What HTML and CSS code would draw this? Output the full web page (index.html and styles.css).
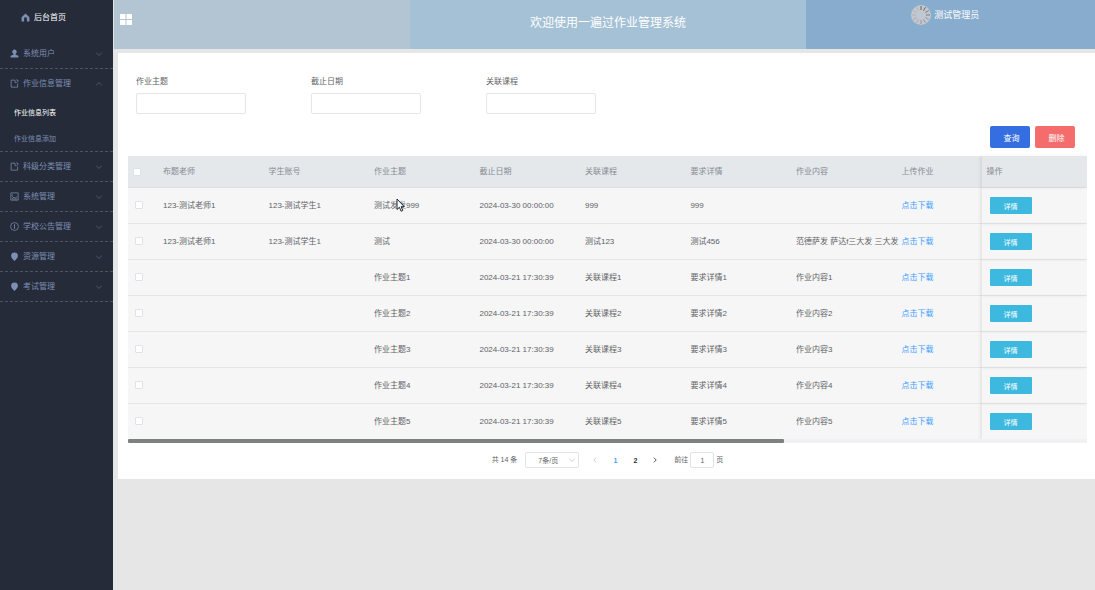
FILE: index.html
```html
<!DOCTYPE html>
<html>
<head>
    <meta charset="UTF-8">
    <title>一遍过作业管理系统</title>
    <link rel="stylesheet" href="styles.css">
</head>
<body>
<svg class="symbols" width="0" height="0">
    <symbol id="down" viewBox="0 0 10 10"><path d="M1.5 3.5L5 6.8l3.5-3.3" fill="none" stroke="currentColor"/></symbol>
    <symbol id="up" viewBox="0 0 10 10"><path d="M1.5 6.5L5 3.2l3.5 3.3" fill="none" stroke="currentColor"/></symbol>
    <symbol id="left" viewBox="0 0 10 10"><path d="M6.500 2L3.500 5l3 3" fill="none" stroke="currentColor"/></symbol>
    <symbol id="right" viewBox="0 0 10 10"><path d="M3.500 2l3 3-3 3" fill="none" stroke="currentColor"/></symbol>
    <symbol id="home" viewBox="0 0 16 16"><path d="M8 1l7 6.5V15h-4.500V10a2.500 2.500 0 0 0-5 0v5H1V7.500z" fill="currentColor"/></symbol>
    <symbol id="user" viewBox="0 0 16 16"><path d="M8 1a4 4 0 0 1 2 7.500V10l5 2v3H1v-3l5-2V8.500A4 4 0 0 1 8 1z" fill="currentColor"/></symbol>
    <symbol id="doc" viewBox="0 0 16 16"><path d="M9 2H2v12.500h11.500V8M9 2v4.500h3M11 1.500l3.500 1-1 3.500" fill="none" stroke="currentColor" stroke-width="1.300"/></symbol>
    <symbol id="pic" viewBox="0 0 16 16"><path d="M1.500 1.500h13v13h-13zM4 4v5M4 12l3-3 2 2 4-3M4 12.500h9" fill="none" stroke="currentColor" stroke-width="1.300"/></symbol>
    <symbol id="info" viewBox="0 0 16 16"><circle cx="8" cy="8" r="7" fill="none" stroke="currentColor" stroke-width="1.300"/><path d="M8 4v8" stroke="currentColor" stroke-width="1.500"/></symbol>
    <symbol id="pin" viewBox="0 0 16 16"><path d="M8 1a6 6 0 0 1 6 6c0 4-4 6-6 9-2-3-6-5-6-9a6 6 0 0 1 6-6z" fill="currentColor"/></symbol>
</svg>

<div class="layout">
    <aside class="sidebar">
        <a class="home" href="#"><svg class="icon"><use href="#home"/></svg>后台首页</a>
        <ul class="menu">
            <li><a class="item" href="#"><svg class="icon"><use href="#user"/></svg>系统用户<svg class="arrow"><use href="#down"/></svg></a></li>
            <li>
                <a class="item" href="#"><svg class="icon"><use href="#doc"/></svg>作业信息管理<svg class="arrow"><use href="#up"/></svg></a>
                <ul class="sub">
                    <li><a class="active" href="#">作业信息列表</a></li>
                    <li><a href="#">作业信息添加</a></li>
                </ul>
            </li>
            <li><a class="item" href="#"><svg class="icon"><use href="#doc"/></svg>科级分类管理<svg class="arrow"><use href="#down"/></svg></a></li>
            <li><a class="item" href="#"><svg class="icon"><use href="#pic"/></svg>系统管理<svg class="arrow"><use href="#down"/></svg></a></li>
            <li><a class="item" href="#"><svg class="icon"><use href="#info"/></svg>学校公告管理<svg class="arrow"><use href="#down"/></svg></a></li>
            <li><a class="item" href="#"><svg class="icon"><use href="#pin"/></svg>资源管理<svg class="arrow"><use href="#down"/></svg></a></li>
            <li><a class="item" href="#"><svg class="icon"><use href="#pin"/></svg>考试管理<svg class="arrow"><use href="#down"/></svg></a></li>
        </ul>
    </aside>

    <div class="main">
        <header class="header">
            <div class="header-left">
                <button class="toggle" type="button" aria-label="菜单">
                    <svg viewBox="0 0 12 11"><path d="M0 0h5.500v5H0zM6.500 0H12v5H6.500zM0 6h5.500v5H0zM6.500 6H12v5H6.500z" fill="#fff"/></svg>
                </button>
            </div>
            <div class="header-center">欢迎使用一遍过作业管理系统</div>
            <div class="header-right">
                <svg class="avatar" viewBox="0 0 20 20">
                    <circle cx="10" cy="10" r="10" fill="#c3c7cf"/>
                    <g stroke-width="1">
                        <path d="M10 1v4M14.500 2.200l-2 3.500" stroke="#666"/>
                        <path d="M17.800 5.500l-3.500 2M19 10h-4" stroke="#777d87"/>
                        <path d="M17.800 14.500l-3.500-2M14.500 17.800l-2-3.500M10 19v-4" stroke="#9297a0"/>
                        <path d="M5.500 17.800l2-3.500M2.200 14.500l3.500-2" stroke="#a5aab2"/>
                        <path d="M1 10h4M2.200 5.500l3.500 2M5.500 2.200l2 3.500" stroke="#b0b4bc"/>
                    </g>
                </svg>
                <span>测试管理员</span>
            </div>
        </header>

        <div class="panel">
            <form class="search">
                <div class="field"><label for="theme">作业主题</label><input type="text" id="theme"></div>
                <div class="field"><label for="deadline">截止日期</label><input type="text" id="deadline"></div>
                <div class="field"><label for="course">关联课程</label><input type="text" id="course"></div>
            </form>
            <div class="actions">
                <button class="btn query" type="button">查询</button>
                <button class="btn delete" type="button">删除</button>
            </div>

            <div class="table-wrap">
                <table class="table">
                    <thead>
                    <tr>
                        <th class="check"><input type="checkbox" aria-label="全选"></th>
                        <th>布题老师</th>
                        <th>学生账号</th>
                        <th>作业主题</th>
                        <th>截止日期</th>
                        <th>关联课程</th>
                        <th>要求详情</th>
                        <th>作业内容</th>
                        <th class="upload">上传作业</th>
                        <th class="op">操作</th>
                    </tr>
                    </thead>
                    <tbody>
                    <tr>
                        <td class="check"><input type="checkbox" aria-label="选择"></td>
                        <td>123-测试老师1</td><td>123-测试学生1</td>
                        <td class="pointed">测试发发999<svg class="cursor" viewBox="0 0 9 14"><path d="M1 1v10.500l2.400-2.200 1.700 3.900 1.700-.7-1.700-3.800h3.200z" fill="#fff" stroke="#1d2233"/></svg></td>
                        <td>2024-03-30 00:00:00</td><td>999</td><td>999</td><td></td>
                        <td><a href="#">点击下载</a></td>
                        <td class="op"><button type="button">详情</button></td>
                    </tr>
                    <tr>
                        <td class="check"><input type="checkbox" aria-label="选择"></td>
                        <td>123-测试老师1</td><td>123-测试学生1</td><td>测试</td>
                        <td>2024-03-30 00:00:00</td><td>测试123</td><td>测试456</td><td>范德萨发 萨达f三大发 三大发</td>
                        <td><a href="#">点击下载</a></td>
                        <td class="op"><button type="button">详情</button></td>
                    </tr>
                    <tr>
                        <td class="check"><input type="checkbox" aria-label="选择"></td>
                        <td></td><td></td><td>作业主题1</td>
                        <td>2024-03-21 17:30:39</td><td>关联课程1</td><td>要求详情1</td><td>作业内容1</td>
                        <td><a href="#">点击下载</a></td>
                        <td class="op"><button type="button">详情</button></td>
                    </tr>
                    <tr>
                        <td class="check"><input type="checkbox" aria-label="选择"></td>
                        <td></td><td></td><td>作业主题2</td>
                        <td>2024-03-21 17:30:39</td><td>关联课程2</td><td>要求详情2</td><td>作业内容2</td>
                        <td><a href="#">点击下载</a></td>
                        <td class="op"><button type="button">详情</button></td>
                    </tr>
                    <tr>
                        <td class="check"><input type="checkbox" aria-label="选择"></td>
                        <td></td><td></td><td>作业主题3</td>
                        <td>2024-03-21 17:30:39</td><td>关联课程3</td><td>要求详情3</td><td>作业内容3</td>
                        <td><a href="#">点击下载</a></td>
                        <td class="op"><button type="button">详情</button></td>
                    </tr>
                    <tr>
                        <td class="check"><input type="checkbox" aria-label="选择"></td>
                        <td></td><td></td><td>作业主题4</td>
                        <td>2024-03-21 17:30:39</td><td>关联课程4</td><td>要求详情4</td><td>作业内容4</td>
                        <td><a href="#">点击下载</a></td>
                        <td class="op"><button type="button">详情</button></td>
                    </tr>
                    <tr>
                        <td class="check"><input type="checkbox" aria-label="选择"></td>
                        <td></td><td></td><td>作业主题5</td>
                        <td>2024-03-21 17:30:39</td><td>关联课程5</td><td>要求详情5</td><td>作业内容5</td>
                        <td><a href="#">点击下载</a></td>
                        <td class="op"><button type="button">详情</button></td>
                    </tr>
                    </tbody>
                </table>
                <div class="scrollbar"><div class="thumb"></div></div>
            </div>

            <div class="pagination">
                <span>共 14 条</span>
                <div class="size">
                    <select aria-label="每页条数"><option>7条/页</option></select>
                    <svg><use href="#down"/></svg>
                </div>
                <div class="pager">
                    <button class="prev" type="button" aria-label="上一页" disabled><svg><use href="#left"/></svg></button>
                    <button class="current" type="button">1</button>
                    <button type="button">2</button>
                    <button type="button" aria-label="下一页"><svg><use href="#right"/></svg></button>
                </div>
                <div class="jump"><label for="page">前往</label><input type="text" id="page" value="1">页</div>
            </div>
        </div>
    </div>
</div>
</body>
</html>
```
FILE: styles.css
```css
* {
    margin: 0;
    padding: 0;
    box-sizing: border-box;
}

body, input, button, select {
    font-family: "Liberation Sans", "Noto Sans CJK SC", sans-serif;
    font-size: 8px;
    color: #606266;
}

body {
    line-height: 12px;
    background: #e6e6e6;
}

a {
    text-decoration: none;
}

ul {
    list-style: none;
}

button {
    border: none;
    background: none;
}

.symbols {
    position: absolute;
}

.layout {
    display: flex;
    min-height: 100vh;
}

/* 左侧菜单 */
.sidebar {
    flex: none;
    width: 113px;
    background: #252b39;
}

.sidebar a {
    display: flex;
    align-items: center;
    color: #7d8fb3;
}

.sidebar .home {
    height: 39px;
    padding: 0 0 4px 21px;
    color: #fff;
}

.icon {
    width: 9px;
    height: 9px;
    margin-right: 4px;
    color: #7d8fb3;
}

.menu > li {
    border-bottom: 1px dashed #50535c;
}

.menu .item {
    height: 29px;
    padding: 0 10px;
}

.arrow {
    width: 8px;
    height: 8px;
    margin-left: auto;
    color: #53607f;
}

.sub {
    padding-top: 1px;
}

.sub a {
    height: 26px;
    padding: 2px 0 0 14px;
    font-size: 7px;
}

.sub .active {
    color: #fff;
}

/* 顶部 */
.main {
    flex: 1;
    min-width: 0;
    padding-left: 1px;
}

.header {
    display: flex;
    height: 49px;
    color: #fff;
}

.header-left {
    width: 30.2%;
    padding: 14px 6px;
    background: #b3c4d3;
}

.toggle {
    display: block;
    width: 12px;
    height: 11px;
}

.toggle svg {
    display: block;
}

.header-center {
    display: flex;
    align-items: center;
    justify-content: center;
    flex: 1;
    padding-bottom: 4px;
    font-size: 12px;
    background: #a5c1d5;
}

.header-right {
    display: flex;
    align-items: center;
    justify-content: center;
    gap: 3px;
    width: 29.5%;
    padding: 0 10px 20px 0;
    font-size: 9px;
    background: #87acce;
}

.avatar {
    width: 20px;
    height: 20px;
}

/* 内容 */
.panel {
    margin: 4px 0 0 4px;
    padding: 23px 8px 11px 10px;
    background: #fff;
}

.search {
    display: flex;
    gap: 65px;
    padding-left: 8px;
}

.field {
    width: 110px;
}

.field label {
    display: block;
    margin-bottom: 5px;
}

.field input {
    display: block;
    width: 100%;
    height: 21px;
    padding: 0 6px;
    border: 1px solid #e4e6ea;
    border-radius: 2px;
}

.actions {
    display: flex;
    justify-content: flex-end;
    gap: 5px;
    margin: 12px 12px 8px 0;
}

.btn {
    width: 40px;
    height: 22px;
    padding-left: 3px;
    border-radius: 2px;
    color: #fff;
}

.query {
    background: #346ee0;
}

.delete {
    background: #f56c6c;
}

.table {
    width: 100%;
    table-layout: fixed;
    border-spacing: 0;
    background: #f6f6f6;
}

.table th, .table td {
    height: 36px;
    padding: 0 5px;
    border-bottom: 1px solid #e4e7ea;
    text-align: left;
    white-space: nowrap;
}

.table th {
    width: 11%;
    height: 32px;
    font-weight: normal;
    color: #868a92;
    background: #e4e8eb;
    border-color: #dce0e5;
}

.table th.check {
    width: 30px;
}

.table th.upload {
    width: auto;
}

.table td.check {
    padding: 0 0 1px 7px;
}

.check input {
    display: block;
    appearance: none;
    width: 8px;
    height: 8px;
    border: 1px solid #dfe2e8;
    border-radius: 1px;
    background: #fff;
}

.table td a {
    color: #409eff;
}

.table .op {
    box-shadow: -2px 0 3px rgba(0, 0, 0, .07);
}

.table td.op {
    padding-left: 8px;
}

.op button {
    display: block;
    width: 42px;
    height: 17px;
    border-radius: 1px;
    font-size: 7px;
    color: #fff;
    background: #3db9e0;
}

.pointed {
    position: relative;
}

/* 鼠标指针 */
.cursor {
    position: absolute;
    left: 27px;
    top: 10px;
    width: 9px;
    height: 14px;
}

.scrollbar {
    height: 4px;
    margin-top: -1px;
    background: #f1f1f4;
}

.thumb {
    position: relative;
    width: 68.4%;
    height: 4px;
    border-radius: 1px;
    background: #7f8080;
}

/* 分页 */
.pagination {
    display: flex;
    align-items: center;
    justify-content: center;
    margin-top: 9px;
    font-size: 7px;
}

.size {
    position: relative;
    width: 54px;
    margin: 0 6px 0 8px;
}

.size select {
    display: block;
    appearance: none;
    width: 100%;
    height: 16px;
    padding: 0 20px 0 12px;
    border: 1px solid #e0e3e8;
    border-radius: 2px;
    font-size: 7px;
    background: #fff;
}

.size svg {
    position: absolute;
    right: 3px;
    top: 4px;
    width: 8px;
    height: 8px;
    color: #c0c4cc;
}

.pager {
    display: flex;
    margin-right: 9px;
}

.pager button {
    display: flex;
    align-items: center;
    justify-content: center;
    width: 20px;
    height: 16px;
    font-size: 7px;
    font-weight: bold;
    color: #303133;
}

.pager svg {
    width: 8px;
    height: 8px;
}

.pager .current {
    color: #409eff;
}

.pager .prev {
    color: #c0c4cc;
}

.jump {
    display: flex;
    align-items: center;
    gap: 2px;
}

.jump input {
    width: 24px;
    height: 16px;
    border: 1px solid #e0e3e8;
    border-radius: 2px;
    font-size: 7px;
    text-align: center;
}
```
